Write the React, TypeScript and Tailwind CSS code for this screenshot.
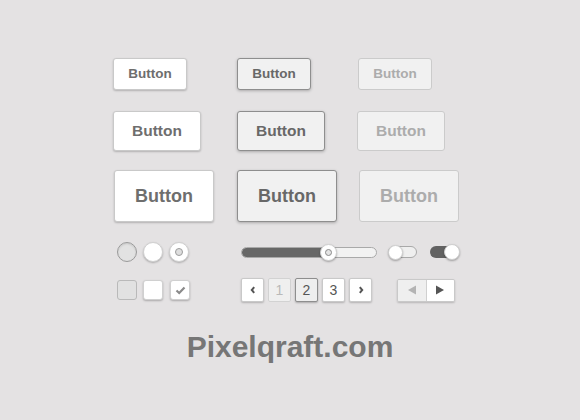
import React from "react";

const font = { fontFamily: '"Liberation Sans", Arial, sans-serif' };

function Btn({ variant, size }: { variant: "normal" | "pressed" | "disabled"; size: 1 | 2 | 3 }) {
  const sizeCls =
    size === 1
      ? "w-[74px] h-[32px] text-[13.5px]"
      : size === 2
      ? "w-[88px] h-[40px] text-[15.5px]"
      : "w-[100px] h-[52px] text-[18px]";
  const varCls =
    variant === "normal"
      ? "bg-white border-[#c9c9c9] text-[#6e6e6e] shadow-[0_1px_2px_rgba(0,0,0,0.22)]"
      : variant === "pressed"
      ? "bg-[#f1f1f1] border-[#8e8e8e] text-[#686868] shadow-[0_1px_3px_rgba(0,0,0,0.25)]"
      : "bg-[#f1f1f1] border-[#cbcbcb] text-[#acacac]";
  return (
    <div className={`flex items-center justify-center rounded-[3px] border font-bold ${sizeCls} ${varCls}`}>
      Button
    </div>
  );
}

function PageBtn({ children, kind }: { children: React.ReactNode; kind?: "disabled" | "active" }) {
  const cls =
    kind === "disabled"
      ? "bg-[#efefef] border-[#d2d2d2] text-[#b9b9b9]"
      : kind === "active"
      ? "bg-[#eeeeee] border-[#8e8e8e] text-[#555] shadow-[0_1px_2px_rgba(0,0,0,0.25)]"
      : "bg-white border-[#c9c9c9] text-[#555] shadow-[0_1px_2px_rgba(0,0,0,0.22)]";
  return (
    <div className={`flex h-[24px] w-[23px] items-center justify-center rounded-[2px] border text-[14px] ${cls}`}>
      {children}
    </div>
  );
}

function Chevron({ dir }: { dir: "left" | "right" }) {
  return (
    <svg width="6" height="8" viewBox="0 0 6 8">
      <path
        d={dir === "left" ? "M4.2 1.2 L1.8 4 L4.2 6.8" : "M1.8 1.2 L4.2 4 L1.8 6.8"}
        fill="none"
        stroke="#555"
        strokeWidth="2"
      />
    </svg>
  );
}

export default function App() {
  return (
    <div className="h-[420px] w-[580px] bg-[#e4e2e3] pl-[113px] pt-[58px]" style={font}>
      {/* Row 1 */}
      <div className="flex items-start">
        <div className="w-[124px]">
          <Btn variant="normal" size={1} />
        </div>
        <div className="w-[121px]">
          <Btn variant="pressed" size={1} />
        </div>
        <Btn variant="disabled" size={1} />
      </div>
      {/* Row 2 */}
      <div className="mt-[21px] flex items-start">
        <div className="w-[124px]">
          <Btn variant="normal" size={2} />
        </div>
        <div className="w-[120px]">
          <Btn variant="pressed" size={2} />
        </div>
        <Btn variant="disabled" size={2} />
      </div>
      {/* Row 3 */}
      <div className="mt-[19px] flex items-start">
        <div className="w-[124px] pl-[1px]">
          <Btn variant="normal" size={3} />
        </div>
        <div className="w-[122px]">
          <Btn variant="pressed" size={3} />
        </div>
        <Btn variant="disabled" size={3} />
      </div>

      {/* Row 4: radios, slider, toggles */}
      <div className="mt-[20px] flex h-[20px] items-center pl-[4px]">
        <div className="flex gap-[6px]">
          <div className="h-[20px] w-[20px] rounded-full border border-[#9a9a9a] bg-[#e2e2e2] shadow-[inset_0_1px_2px_rgba(0,0,0,0.12)]" />
          <div className="h-[20px] w-[20px] rounded-full border border-[#d0d0d0] bg-white shadow-[0_1px_2px_rgba(0,0,0,0.25)]" />
          <div className="flex h-[20px] w-[20px] items-center justify-center rounded-full border border-[#d0d0d0] bg-white shadow-[0_1px_2px_rgba(0,0,0,0.25)]">
            <div className="h-[8px] w-[8px] rounded-full border border-[#9c9c9c] bg-[#dedede]" />
          </div>
        </div>
        {/* slider */}
        <div className="relative ml-[52px] flex h-[11px] w-[136px] items-center rounded-full border border-[#a9a9a9] bg-[#f2f2f2]">
          <div className="h-full w-[87px] rounded-l-full bg-[#676767]" />
          <div className="absolute left-[78px] top-[-4px] flex h-[17px] w-[17px] items-center justify-center rounded-full border border-[#cfcfcf] bg-white shadow-[0_1px_2px_rgba(0,0,0,0.3)]">
            <div className="h-[7px] w-[7px] rounded-full border border-[#8a8a8a] bg-[#e4e4e4]" />
          </div>
        </div>
        {/* toggle off */}
        <div className="relative ml-[11px] h-[12px] w-[29px] rounded-full border border-[#a9a9a9] bg-[#efefef]">
          <div className="absolute left-[-1px] top-[-2.5px] h-[15px] w-[15px] rounded-full border border-[#cfcfcf] bg-white shadow-[0_1px_2px_rgba(0,0,0,0.3)]" />
        </div>
        {/* toggle on */}
        <div className="relative ml-[13px] h-[12px] w-[29px] rounded-full bg-[#626262]">
          <div className="absolute right-[-1px] top-[-2px] h-[16px] w-[16px] rounded-full border border-[#cfcfcf] bg-white shadow-[0_1px_2px_rgba(0,0,0,0.3)]" />
        </div>
      </div>

      {/* Row 5: checkboxes, pagination, arrows */}
      <div className="mt-[16px] flex h-[24px] items-center pl-[4px]">
        <div className="flex gap-[6px]">
          <div className="h-[20px] w-[20px] rounded-[3px] border border-[#b9b9b9] bg-[#e1e1e1]" />
          <div className="h-[20px] w-[20px] rounded-[3px] border border-[#d0d0d0] bg-white shadow-[0_1px_2px_rgba(0,0,0,0.25)]" />
          <div className="ml-[1px] flex h-[20px] w-[20px] items-center justify-center rounded-[3px] border border-[#d0d0d0] bg-white shadow-[0_1px_2px_rgba(0,0,0,0.25)]">
            <svg width="11" height="9" viewBox="0 0 11 9">
              <path d="M1.5 4.5 L4.2 7 L9.5 1.5" fill="none" stroke="#8a8a8a" strokeWidth="2.2" />
            </svg>
          </div>
        </div>
        <div className="ml-[51px] flex gap-[4px]">
          <PageBtn>
            <Chevron dir="left" />
          </PageBtn>
          <PageBtn kind="disabled">1</PageBtn>
          <PageBtn kind="active">2</PageBtn>
          <PageBtn>3</PageBtn>
          <PageBtn>
            <Chevron dir="right" />
          </PageBtn>
        </div>
        <div className="ml-[25px] flex h-[23px] w-[58px] overflow-hidden rounded-[2px] border border-[#c9c9c9] shadow-[0_1px_2px_rgba(0,0,0,0.2)]">
          <div className="flex flex-1 items-center justify-center border-r border-[#d0d0d0] bg-[#efefef]">
            <svg width="10" height="10" viewBox="0 0 10 10">
              <path d="M1 5 L9 0.5 L9 9.5 Z" fill="#b4b4b4" />
            </svg>
          </div>
          <div className="flex flex-1 items-center justify-center bg-white">
            <svg width="10" height="10" viewBox="0 0 10 10">
              <path d="M9 5 L1 0.5 L1 9.5 Z" fill="#555" />
            </svg>
          </div>
        </div>
      </div>

      {/* Footer text */}
      <div className="-ml-[113px] mt-[28px] w-[580px] text-center text-[30px] font-bold leading-[34px] text-[#767676]">
        Pixelqraft.com
      </div>
    </div>
  );
}
